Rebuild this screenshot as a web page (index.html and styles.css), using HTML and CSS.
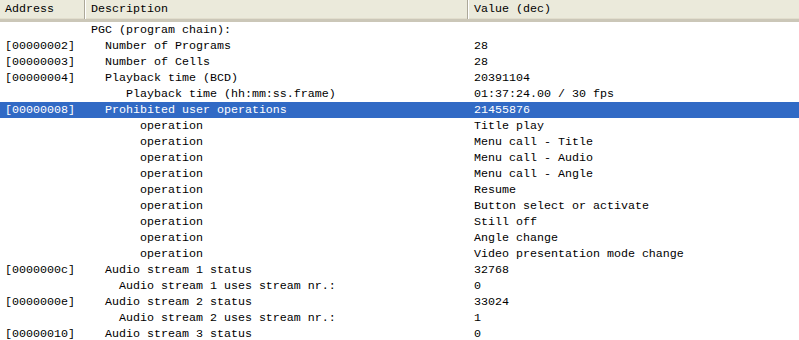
FILE: index.html
```html
<!DOCTYPE html>
<html>
<head>
<meta charset="utf-8">
<link rel="stylesheet" href="styles.css">
</head>
<body>
<div class="list">
  <div class="header">
    <div class="hcell c1">Address</div>
    <div class="hcell c2">Description</div>
    <div class="hcell c3">Value (dec)</div>
  </div>
  <div class="rows">
    <div class="row"><span class="a"></span><span class="d">PGC (program chain):</span><span class="v"></span></div>
    <div class="row"><span class="a">[00000002]</span><span class="d">  Number of Programs</span><span class="v">28</span></div>
    <div class="row"><span class="a">[00000003]</span><span class="d">  Number of Cells</span><span class="v">28</span></div>
    <div class="row"><span class="a">[00000004]</span><span class="d">  Playback time (BCD)</span><span class="v">20391104</span></div>
    <div class="row"><span class="a"></span><span class="d">     Playback time (hh:mm:ss.frame)</span><span class="v">01:37:24.00 / 30 fps</span></div>
    <div class="row sel"><span class="a">[00000008]</span><span class="d">  Prohibited user operations</span><span class="v">21455876</span></div>
    <div class="row"><span class="a"></span><span class="d">       operation</span><span class="v">Title play</span></div>
    <div class="row"><span class="a"></span><span class="d">       operation</span><span class="v">Menu call - Title</span></div>
    <div class="row"><span class="a"></span><span class="d">       operation</span><span class="v">Menu call - Audio</span></div>
    <div class="row"><span class="a"></span><span class="d">       operation</span><span class="v">Menu call - Angle</span></div>
    <div class="row"><span class="a"></span><span class="d">       operation</span><span class="v">Resume</span></div>
    <div class="row"><span class="a"></span><span class="d">       operation</span><span class="v">Button select or activate</span></div>
    <div class="row"><span class="a"></span><span class="d">       operation</span><span class="v">Still off</span></div>
    <div class="row"><span class="a"></span><span class="d">       operation</span><span class="v">Angle change</span></div>
    <div class="row"><span class="a"></span><span class="d">       operation</span><span class="v">Video presentation mode change</span></div>
    <div class="row"><span class="a">[0000000c]</span><span class="d">  Audio stream 1 status</span><span class="v">32768</span></div>
    <div class="row"><span class="a"></span><span class="d">    Audio stream 1 uses stream nr.:</span><span class="v">0</span></div>
    <div class="row"><span class="a">[0000000e]</span><span class="d">  Audio stream 2 status</span><span class="v">33024</span></div>
    <div class="row"><span class="a"></span><span class="d">    Audio stream 2 uses stream nr.:</span><span class="v">1</span></div>
    <div class="row"><span class="a">[00000010]</span><span class="d">  Audio stream 3 status</span><span class="v">0</span></div>
  </div>
</div>
</body>
</html>
```

FILE: styles.css
```css
html, body {
  margin: 0;
  padding: 0;
  background: #ffffff;
}
body {
  width: 799px;
  height: 340px;
  overflow: hidden;
  font-family: "Liberation Mono", "Courier New", monospace;
  font-size: 11.667px;
  color: #000000;
}
.list {
  display: flex;
  flex-direction: column;
}
.header {
  display: grid;
  grid-template-columns: 85px 383px 1fr;
  height: 19px;
  background: #ebeadb;
  border-bottom: 3px solid #cbc7b8;
  box-shadow: inset 0 -1px 0 #e2decd;
}
.hcell {
  line-height: 19px;
  padding-left: 5px;
  white-space: pre;
}
.hcell.c1 {
  border-right: 1px solid #aca899;
}
.hcell.c2 {
  border-left: 1px solid #ffffff;
  border-right: 1px solid #aca899;
}
.hcell.c3 {
  border-left: 1px solid #ffffff;
}
.rows {
  display: flex;
  flex-direction: column;
}
.row {
  display: grid;
  grid-template-columns: 86px 382px 1fr;
  height: 16px;
  flex: 0 0 16px;
  line-height: 16px;
  white-space: pre;
}
.row .a { padding-left: 5px; }
.row .d { padding-left: 5px; }
.row .v { padding-left: 6px; }
.row.sel {
  background: #316ac5;
  color: #ffffff;
}
```
